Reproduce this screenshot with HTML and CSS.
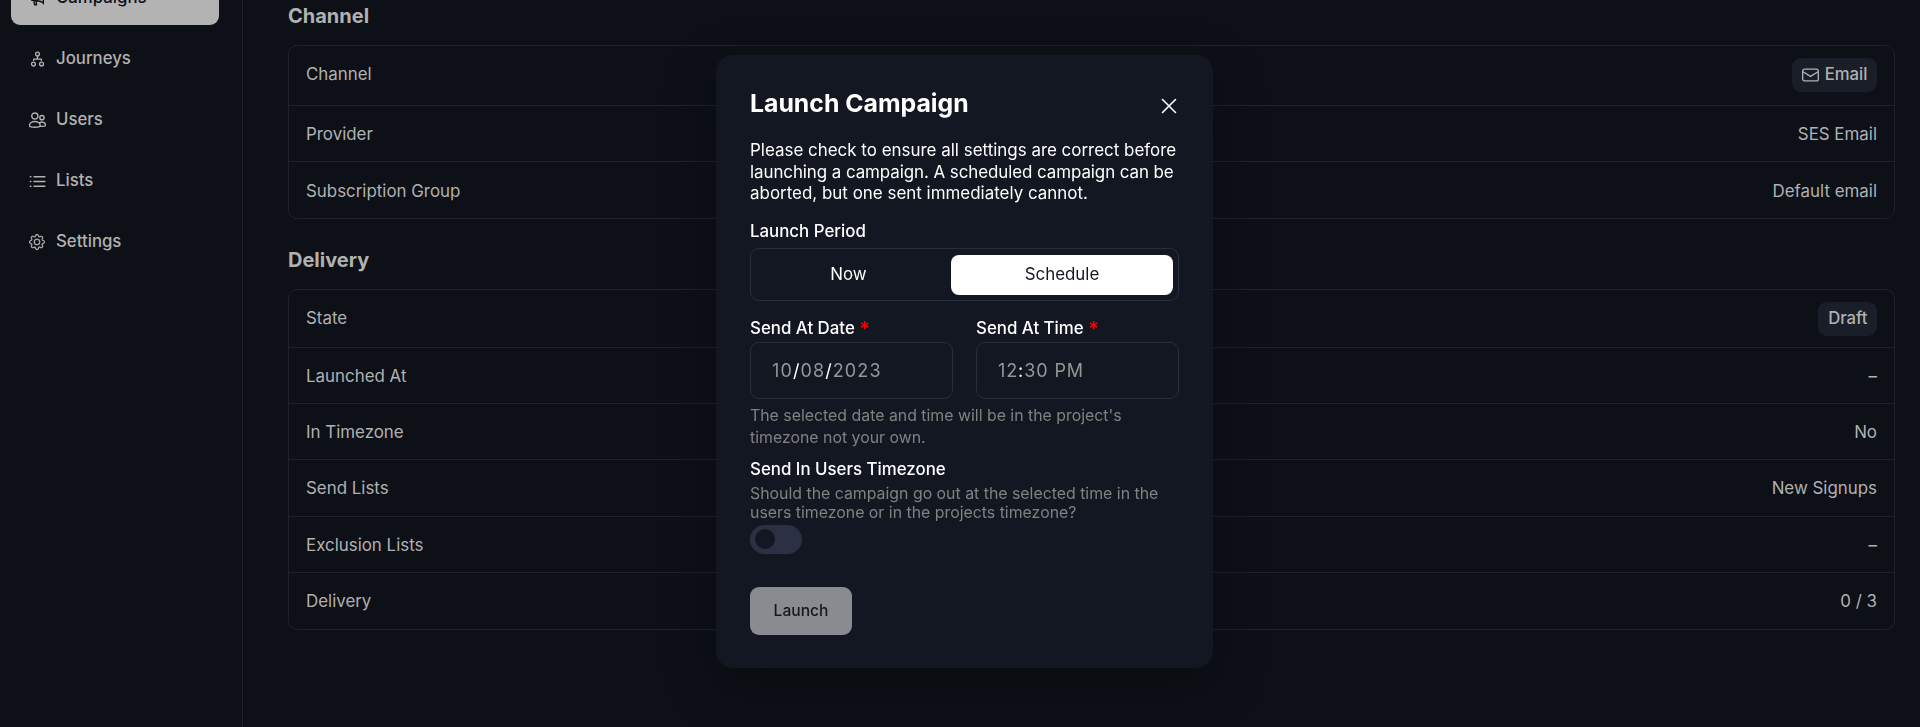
FILE: index.html
```html
<!DOCTYPE html>
<html lang="en">
<head>
<meta charset="utf-8">
<title>Launch Campaign</title>
<link rel="stylesheet" href="styles.css">
</head>
<body>
<div class="shell">
  <nav class="sidebar">
    <a class="nav-item nav-item-active"><svg class="nav-icon" viewBox="0 0 16 16"><path d="M13.5 2v11M13.5 3.2C11 5 7 5.6 2.600 5.700v3.900C7 9.700 11 10.300 13.500 12M4.500 9.700l.8 4.300h1.800l-.6-4.100"/></svg><span>Campaigns</span></a>
    <a class="nav-item"><svg class="nav-icon" viewBox="0 0 16 16"><circle cx="8" cy="2.900" r="1.800"/><circle cx="4.200" cy="12.300" r="1.800"/><circle cx="11.800" cy="12.300" r="1.800"/><path d="M8 4.700v3M4.400 8.700v-1h7.200v1"/></svg><span>Journeys</span></a>
    <a class="nav-item"><svg class="nav-icon" viewBox="0 0 16 16"><circle cx="5.500" cy="3.800" r="2.900"/><circle cx="12.200" cy="5.300" r="2"/><path d="M.4 13C.4 10.600 2.600 9 5.500 9s5.100 1.600 5.100 4c-.6 1.800-9.600 1.800-10.200 0zM10.200 10c1.900-1.300 5.400-.3 5.500 2.400-.3 1-2.600 1.300-5 1"/></svg><span>Users</span></a>
    <a class="nav-item"><svg class="nav-icon" viewBox="0 0 16 16"><path d="M4.700 3.500H15M4.700 8H15M4.700 12.500H15M1.200 3.500h.6M1.200 8h.6M1.200 12.500h.6"/></svg><span>Lists</span></a>
    <a class="nav-item"><svg class="nav-icon nav-icon-solid" viewBox="0 0 16 16"><path d="M8 4.754a3.246 3.246 0 1 0 0 6.492 3.246 3.246 0 0 0 0-6.492zM5.754 8a2.246 2.246 0 1 1 4.492 0 2.246 2.246 0 0 1-4.492 0z"/><path d="M9.796 1.343c-.527-1.790-3.065-1.790-3.592 0l-.094.319a.873.873 0 0 1-1.255.520l-.292-.160c-1.640-.892-3.433.902-2.540 2.541l.159.292a.873.873 0 0 1-.520 1.255l-.319.094c-1.790.527-1.790 3.065 0 3.592l.319.094a.873.873 0 0 1 .520 1.255l-.160.292c-.892 1.640.901 3.434 2.541 2.540l.292-.159a.873.873 0 0 1 1.255.520l.094.319c.527 1.790 3.065 1.790 3.592 0l.094-.319a.873.873 0 0 1 1.255-.520l.292.160c1.640.893 3.434-.902 2.540-2.541l-.159-.292a.873.873 0 0 1 .520-1.255l.319-.094c1.790-.527 1.790-3.065 0-3.592l-.319-.094a.873.873 0 0 1-.520-1.255l.160-.292c.893-1.640-.902-3.433-2.541-2.540l-.292.159a.873.873 0 0 1-1.255-.520l-.094-.319zm-2.633.283c.246-.835 1.428-.835 1.674 0l.094.319a1.873 1.873 0 0 0 2.693 1.115l.291-.160c.764-.415 1.600.420 1.184 1.185l-.159.292a1.873 1.873 0 0 0 1.116 2.692l.318.094c.835.246.835 1.428 0 1.674l-.319.094a1.873 1.873 0 0 0-1.115 2.693l.160.291c.415.764-.420 1.600-1.185 1.184l-.291-.159a1.873 1.873 0 0 0-2.693 1.116l-.094.318c-.246.835-1.428.835-1.674 0l-.094-.319a1.873 1.873 0 0 0-2.692-1.115l-.292.160c-.764.415-1.600-.420-1.184-1.185l.159-.291A1.873 1.873 0 0 0 1.945 8.930l-.319-.094c-.835-.246-.835-1.428 0-1.674l.319-.094A1.873 1.873 0 0 0 3.060 4.377l-.160-.292c-.415-.764.420-1.600 1.185-1.184l.292.159a1.873 1.873 0 0 0 2.692-1.115l.094-.319z"/></svg><span>Settings</span></a>
  </nav>
  <main class="content">
    <h3 class="section-title">Channel</h3>
    <dl class="info">
      <div class="row row-tall"><dt>Channel</dt><dd><span class="tag"><svg class="tag-icon" viewBox="0 0 18 14"><rect x=".7" y=".7" width="16.600" height="12.600" rx="2"/><path d="M1 3.500l8 5 8-5"/></svg><span>Email</span></span></dd></div>
      <div class="row"><dt>Provider</dt><dd>SES Email</dd></div>
      <div class="row"><dt>Subscription Group</dt><dd>Default email</dd></div>
    </dl>
    <h3 class="section-title">Delivery</h3>
    <dl class="info">
      <div class="row row-state"><dt>State</dt><dd><span class="tag">Draft</span></dd></div>
      <div class="row"><dt>Launched At</dt><dd>–</dd></div>
      <div class="row"><dt>In Timezone</dt><dd>No</dd></div>
      <div class="row"><dt>Send Lists</dt><dd>New Signups</dd></div>
      <div class="row"><dt>Exclusion Lists</dt><dd>–</dd></div>
      <div class="row"><dt>Delivery</dt><dd>0 / 3</dd></div>
    </dl>
  </main>
</div>
<div class="overlay">
  <section class="modal" role="dialog">
    <header class="modal-header"><h2 class="modal-title">Launch Campaign</h2><svg class="close" viewBox="0 0 16 16"><path d="M1.500 1.500l13 13M14.500 1.500l-13 13"/></svg></header>
    <p class="intro">Please check to ensure all settings are correct before<br><span class="intro-line">launching a campaign. A scheduled campaign can be</span><br>aborted, but one sent immediately cannot.</p>
    <div class="label">Launch Period</div>
    <div class="segments"><div class="segment">Now</div><div class="segment segment-active">Schedule</div></div>
    <div class="fields">
      <div><div class="label">Send At Date <b class="required">*</b></div><div class="input"><span>10<i>/</i>08<i>/</i>2023</span></div></div>
      <div><div class="label">Send At Time <b class="required">*</b></div><div class="input input-time"><span>12<i>:</i>30 PM</span></div></div>
    </div>
    <p class="hint">The selected date and time will be in the project's<br>timezone not your own.</p>
    <div class="label">Send In Users Timezone</div>
    <p class="hint hint-tight">Should the campaign go out at the selected time in the<br>users timezone or in the projects timezone?</p>
    <div class="switch"><div class="knob"></div></div>
    <button class="launch">Launch</button>
  </section>
</div>
</body>
</html>
```

FILE: styles.css
```css
* { box-sizing: border-box; }
body { margin: 0; height: 727px; overflow: hidden; background: #0d1017; color: #b1b1b1; font: 16.900px/21.600px Inter, sans-serif; }
.shell { display: grid; grid-template-columns: 243px 1fr; height: 727px; }
.sidebar { display: flex; flex-direction: column; gap: 8px; margin-top: -28.500px; padding: 0 23px 0 11px; border-right: 1px solid #1e222d; }
.nav-item { display: flex; align-items: center; gap: 10.500px; height: 53px; flex: none; padding-left: 17.500px; border-radius: 9px; font-size: 16.800px; font-weight: 500; }
.nav-item-active { background: #b3b3b3; color: #0d1017; }
.nav-icon { width: 17px; height: 17px; fill: none; stroke: currentColor; stroke-width: 1.300; stroke-linecap: round; stroke-linejoin: round; }
.nav-icon-solid { width: 16px; height: 16px; margin-right: 1px; fill: currentColor; stroke-width: .200; }
.content { padding: 0 25px 0 45px; }
.section-title { margin: 0; padding-top: 3px; height: 45px; font-size: 20px; line-height: 27px; font-weight: 700; }
.info { margin: 0 0 24.500px; border: 1px solid #1e222d; border-radius: 9px; }
.row { display: flex; justify-content: space-between; align-items: center; height: 56.300px; padding: 2px 17px 0; border-bottom: 1px solid #1e222d; }
.row:last-child { height: 56px; border-bottom: 0; }
.row-tall { height: 60px; padding-top: 0; padding-bottom: 1px; }
.row-state { height: 58px; padding-top: 1px; }
dd { margin: 0; }
.tag { display: flex; align-items: center; gap: 5.500px; height: 34px; padding: 0 9.500px 0 10px; border-radius: 9px; background: #1a1e29; font-weight: 500; font-size: 16.700px; }
.tag-icon { width: 17px; height: 14px; fill: none; stroke: currentColor; stroke-width: 1.400; }
.overlay { position: fixed; inset: 0; display: flex; justify-content: center; align-items: flex-start; padding: 55px 0 0 9px; }
.modal { width: 497px; height: 613px; padding: 34px; border-radius: 17px; background: #131721; color: #fff; white-space: nowrap; box-shadow: 0 18px 54px rgba(0,0,0,.28); }
.modal-header { display: flex; justify-content: space-between; align-items: center; height: 28px; }
.modal-title { margin: 0; font-size: 24.800px; line-height: 28px; font-weight: 700; }
.close { width: 16px; height: 16px; margin: 6px 2px 0 0; fill: none; stroke: #fff; stroke-width: 1.600; stroke-linecap: round; }
.intro { margin: 23px 0 16.500px; font-size: 16.950px; }
.intro-line { letter-spacing: -.080px; }
.label { font-weight: 500; font-size: 16.850px; }
.segments { display: grid; grid-template-columns: 185px 222px; gap: 10px; height: 53px; margin: 4.800px 0 17.500px; padding: 6px 5px 5px; border: 1px solid #282d3f; border-radius: 9px; }
.segment { display: flex; align-items: center; justify-content: center; border-radius: 8px; }
.segment-active { background: #fff; color: #131721; }
.fields { display: grid; grid-template-columns: 1fr 1fr; gap: 23px; }
.required { color: #f00; font-size: 20px; line-height: 1; font-weight: 600; vertical-align: -2px; }
.fields .label { height: 21.600px; }
.input { display: flex; align-items: center; height: 57px; margin-top: 2.300px; padding: 1px 0 0 21px; border: 1px solid #282d3f; border-radius: 9px; color: #969696; font-size: 18px; letter-spacing: 1.100px; }
.input-time { letter-spacing: .900px; }
.input i { color: #fff; font-style: normal; }
.hint { margin: 6px 0 10.500px; color: #818181; font-size: 15.870px; }
.hint-tight { margin: 3.300px 0 2px; line-height: 19.500px; }
.switch { display: flex; align-items: center; width: 52px; height: 29px; padding-left: 5px; border-radius: 15px; background: #2b3044; }
.knob { width: 20px; height: 20px; border-radius: 50%; background: #131721; }
.launch { width: 102px; height: 48px; margin-top: 33px; padding: 0; border: 0; border-radius: 9px; background: #8a8b90; color: #131721; font: 500 15.600px Inter, sans-serif; }
```
